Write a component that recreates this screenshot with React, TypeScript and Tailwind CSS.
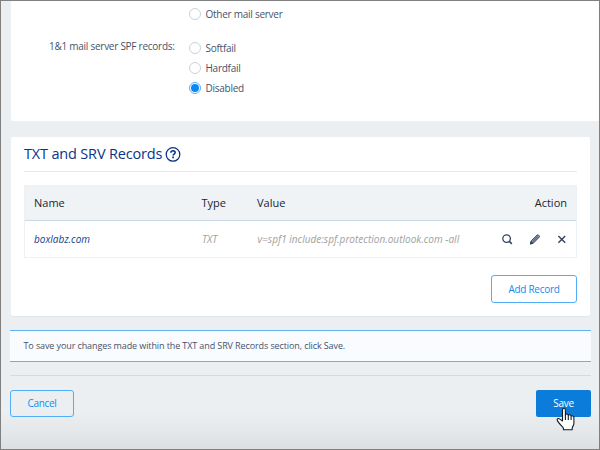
import type { ReactNode } from "react";

function Radio({ label, checked = false }: { label: string; checked?: boolean }) {
  return (
    <label className="flex h-5 items-center gap-[4.5px]">
      <span
        className={
          checked
            ? "flex size-3 items-center justify-center rounded-full border border-[#55adf5] bg-white"
            : "size-3 rounded-full border border-[#cbd2dc] bg-white"
        }
      >
        {checked && <span className="size-2 rounded-full bg-[#0a86f5]" />}
      </span>
      <span className="leading-5">{label}</span>
    </label>
  );
}

function IconSlot({ children }: { children: ReactNode }) {
  return <button className="flex size-3 items-center justify-center">{children}</button>;
}

function SearchIcon() {
  return (
    <svg width="12" height="12" viewBox="0 0 12 12" fill="none" stroke="#36425f">
      <circle cx="5.6" cy="5.6" r="3.8" strokeWidth="1.3" />
      <path d="M8.3 8.4 10.8 10.9" strokeWidth="1.6" />
    </svg>
  );
}

function PencilIcon() {
  return (
    <svg width="12" height="12" viewBox="0 0 12 12" fill="none" stroke="#36425f" strokeWidth="1">
      <path d="M1.5 10.9 2.4 7.7 8.1 2.1Q8.8 1.5 9.6 2.2L10.2 2.8Q10.9 3.5 10.2 4.2L4.6 9.9Z" fill="#8e9aac" />
      <path d="M1.3 11.1 2.1 8.6 3.7 10.3Z" fill="#36425f" />
      <path d="M3.6 8.7 8.8 3.5" strokeWidth=".8" />
    </svg>
  );
}

function CloseIcon() {
  return (
    <svg width="12" height="12" viewBox="0 0 12 12" fill="none" stroke="#36425f" strokeWidth="1.4">
      <path d="M2.4 3 9.2 9.8M9.2 3 2.4 9.8" />
    </svg>
  );
}

function HelpIcon() {
  return (
    <svg width="16" height="16" viewBox="0 0 16 16" fill="none" stroke="#0b3388">
      <circle cx="8" cy="8.4" r="6.8" strokeWidth="1.25" />
      <path d="M5.9 6.8C5.9 4.1 10.2 4.2 10.2 6.6 10.2 8.1 8.1 8.1 8.1 9.6" strokeWidth="1.6" />
      <path d="M8.1 10.6V12.2" strokeWidth="1.7" />
    </svg>
  );
}

function HandCursor() {
  return (
    <svg
      className="absolute top-[17px] left-[20px]"
      width="20"
      height="25"
      viewBox="0 0 20 25"
      fill="white"
      stroke="#151b25"
      strokeWidth="1.1"
      strokeLinejoin="round"
    >
      <path d="M6.5 14V3.2C6.5 .5 9.4 .5 9.4 3.2V8.3C9.7 6.5 12.2 6.7 12.3 8.5 12.8 7.3 14.9 7.5 15.1 9.2 15.9 8.3 17.9 8.8 17.9 10.6V16.5C17.9 18.5 16.4 19.7 16.2 21V22.7H7.4V21C5.4 18.7 3.2 16.6 1.7 14.1 .3 11.9 2.3 10.8 3.9 12.1Z" />
      <path d="M9.4 8V13M12.3 8.5V13M15.1 9.2V13" />
    </svg>
  );
}

export default function App() {
  return (
    <div className="h-[450px] w-[600px] overflow-hidden border border-[#808080] bg-[linear-gradient(#ebeff2_0,#ebeff2_410px,#e5e8eb_430px,#dcdfe2_448px)] font-['Open_Sans','Noto_Sans',sans-serif] text-[10px] text-[#46536b]">
      <section className="ml-[10px] flex h-[120px] rounded-bl-[2px] bg-white pt-[3px] tracking-[-0.26px]">
        <div className="w-[178px] pt-[32px] pl-[38px] leading-5 whitespace-nowrap">
          1&amp;1 mail server SPF records:
        </div>
        <div className="flex flex-col">
          <Radio label="Other mail server" />
          <div className="mt-[14px] flex flex-col">
            <Radio label="Softfail" />
            <Radio label="Hardfail" />
            <Radio label="Disabled" checked />
          </div>
        </div>
      </section>

      <section className="mt-4 mr-[9px] ml-[10px] h-[179px] rounded-[2px] bg-white px-[13px] shadow-[0_1px_0_#e2e6e9]">
        <div className="flex h-[35px] items-center gap-[3px] border-b border-[#e7eaec] text-[#0b3388]">
          <h2 className="text-[14.5px] leading-5 tracking-[-0.17px]">TXT and SRV Records</h2>
          <HelpIcon />
        </div>
        <div className="mt-[13px] border border-[#eef1f3]">
          <div className="flex h-[35px] items-center border-b border-[#cbd9e8] bg-[#eff3f6] px-[9px] text-[11px] text-[#1c2430]">
            <div className="w-[167.5px]">Name</div>
            <div className="w-[55.5px]">Type</div>
            <div className="flex-1">Value</div>
            <div>Action</div>
          </div>
          <div className="flex h-[36px] items-center pr-[8px] pl-[9px] text-[#a0a0a0] italic">
            <div className="w-[168px] font-medium text-[#0b3f8d]">boxlabz.com</div>
            <div className="w-[55.5px]">TXT</div>
            <div className="flex-1 tracking-[0.02px]">v=spf1 include:spf.protection.outlook.com -all</div>
            <div className="flex gap-[15.5px]">
              <IconSlot><SearchIcon /></IconSlot>
              <IconSlot><PencilIcon /></IconSlot>
              <IconSlot><CloseIcon /></IconSlot>
            </div>
          </div>
        </div>
        <div className="mt-[17px] flex justify-end">
          <button className="h-7 w-[86px] rounded-[3px] border border-[#50adf6] font-medium tracking-[-0.28px] text-[#118bf3]">Add Record</button>
        </div>
      </section>

      <div className="mt-[14px] mr-2 ml-[9px] flex h-8 items-center border-y-[1.5px] border-[#62b3f6] bg-[#fafbfe] pl-[13.5px] text-[9px] tracking-[-0.105px]">
        To save your changes made within the TXT and SRV Records section, click Save.
      </div>

      <div className="mt-[13px] mr-2 ml-[9px] border-t border-[#d5dade] pt-[14px]">
        <div className="flex justify-between">
          <button className="h-[27px] w-[64px] rounded-[3px] border border-[#50adf6] font-medium tracking-[-0.28px] text-[#118bf3]">Cancel</button>
          <button className="relative h-[27px] w-[55px] rounded-[2px] bg-[#0b7cd9] font-medium tracking-[-0.28px] text-white">
            Save
            <HandCursor />
          </button>
        </div>
      </div>
    </div>
  );
}
